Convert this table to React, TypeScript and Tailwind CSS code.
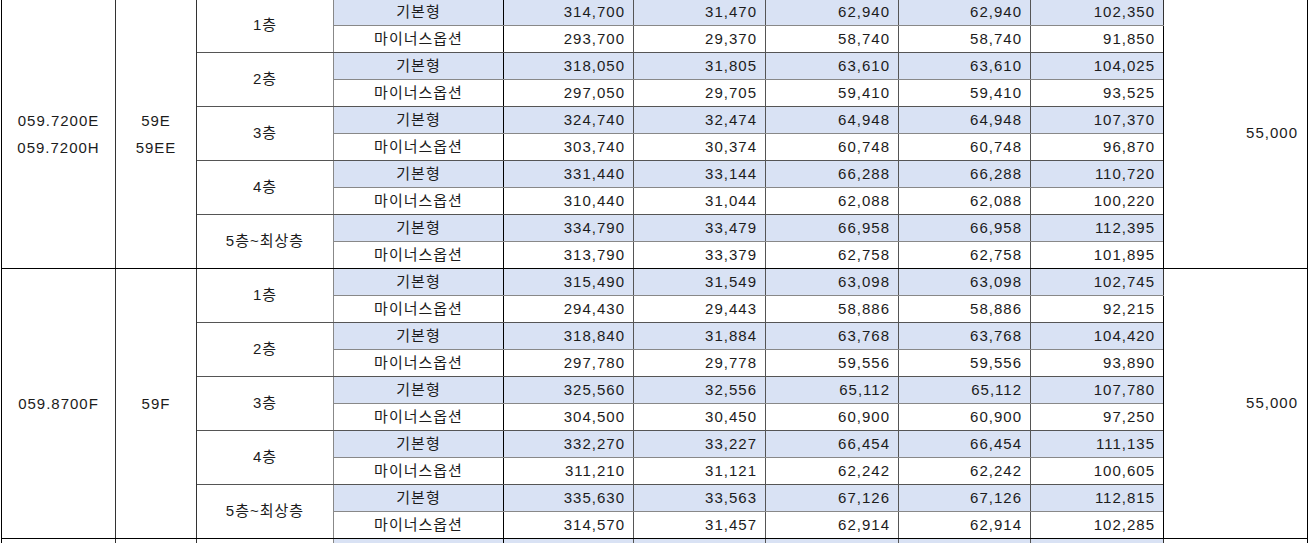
import React from "react";

type Floor = { name: string; base: string[]; minus: string[] };
type Group = { codes: string[]; types: string[]; last: string; floors: Floor[] };

const groups: Group[] = [
  {
    codes: ["059.7200E", "059.7200H"],
    types: ["59E", "59EE"],
    last: "55,000",
    floors: [
      { name: "1층", base: ["314,700", "31,470", "62,940", "62,940", "102,350"], minus: ["293,700", "29,370", "58,740", "58,740", "91,850"] },
      { name: "2층", base: ["318,050", "31,805", "63,610", "63,610", "104,025"], minus: ["297,050", "29,705", "59,410", "59,410", "93,525"] },
      { name: "3층", base: ["324,740", "32,474", "64,948", "64,948", "107,370"], minus: ["303,740", "30,374", "60,748", "60,748", "96,870"] },
      { name: "4층", base: ["331,440", "33,144", "66,288", "66,288", "110,720"], minus: ["310,440", "31,044", "62,088", "62,088", "100,220"] },
      { name: "5층~최상층", base: ["334,790", "33,479", "66,958", "66,958", "112,395"], minus: ["313,790", "33,379", "62,758", "62,758", "101,895"] },
    ],
  },
  {
    codes: ["059.8700F"],
    types: ["59F"],
    last: "55,000",
    floors: [
      { name: "1층", base: ["315,490", "31,549", "63,098", "63,098", "102,745"], minus: ["294,430", "29,443", "58,886", "58,886", "92,215"] },
      { name: "2층", base: ["318,840", "31,884", "63,768", "63,768", "104,420"], minus: ["297,780", "29,778", "59,556", "59,556", "93,890"] },
      { name: "3층", base: ["325,560", "32,556", "65,112", "65,112", "107,780"], minus: ["304,500", "30,450", "60,900", "60,900", "97,250"] },
      { name: "4층", base: ["332,270", "33,227", "66,454", "66,454", "111,135"], minus: ["311,210", "31,121", "62,242", "62,242", "100,605"] },
      { name: "5층~최상층", base: ["335,630", "33,563", "67,126", "67,126", "112,815"], minus: ["314,570", "31,457", "62,914", "62,914", "102,285"] },
    ],
  },
];

const widths = [114, 81, 137, 170, 130, 132, 133, 132, 133, 144];

const numRight = ["border-r-[#555]", "border-r-[#555]", "border-r-[#555]", "border-r-[#555]", "border-r-[#333]"];

export default function App() {
  return (
    <div className="h-[543px] w-full overflow-hidden bg-white">
      <table
        className="-mt-[2px] ml-px table-fixed border-collapse text-[15px] tracking-[1px] text-[#1c1c1c] font-['Liberation_Sans','Noto_Sans_CJK_KR',sans-serif]"
        style={{ width: 1306 }}
      >
        <colgroup>
          {widths.map((w, i) => (
            <col key={i} style={{ width: w }} />
          ))}
        </colgroup>
        <tbody>
          {groups.map((g, gi) =>
            g.floors.map((f, fi) => {
              const lastFloor = fi === g.floors.length - 1;
              return (
                <React.Fragment key={`${gi}-${fi}`}>
                  <tr className="h-[27px]">
                    {fi === 0 && (
                      <>
                        <td rowSpan={10} className="border border-black border-r-[#333] p-0 text-center align-middle leading-[27px]">
                          {g.codes.map((c) => (
                            <div key={c}>{c}</div>
                          ))}
                        </td>
                        <td rowSpan={10} className="border border-black border-r-[#333] p-0 text-center align-middle leading-[27px]">
                          {g.types.map((c) => (
                            <div key={c}>{c}</div>
                          ))}
                        </td>
                      </>
                    )}
                    <td
                      rowSpan={2}
                      className={`border border-r-[#888] p-0 text-center align-middle ${lastFloor ? "border-b-black" : "border-b-[#555]"} ${fi === 0 ? "border-t-black" : "border-t-[#555]"}`}
                    >
                      {f.name}
                    </td>
                    <td className={`border border-b-[#888] border-r-black bg-[#d9e2f4] p-0 text-center align-middle ${fi === 0 ? "border-t-black" : "border-t-[#555]"}`}>
                      기본형
                    </td>
                    {f.base.map((v, i) => (
                      <td
                        key={i}
                        className={`border border-b-[#888] bg-[#d9e2f4] p-0 pr-[8px] text-right align-middle ${numRight[i]} ${fi === 0 ? "border-t-black" : "border-t-[#555]"}`}
                      >
                        {v}
                      </td>
                    ))}
                    {fi === 0 && (
                      <td rowSpan={10} className="border border-black p-0 pr-[9px] text-right align-middle">
                        {g.last}
                      </td>
                    )}
                  </tr>
                  <tr className="h-[27px]">
                    <td className={`border border-r-black p-0 text-center align-middle ${lastFloor ? "border-b-black" : "border-b-[#555]"}`}>
                      마이너스옵션
                    </td>
                    {f.minus.map((v, i) => (
                      <td
                        key={i}
                        className={`border p-0 pr-[8px] text-right align-middle ${numRight[i]} ${lastFloor ? "border-b-black" : "border-b-[#555]"}`}
                      >
                        {v}
                      </td>
                    ))}
                  </tr>
                </React.Fragment>
              );
            })
          )}
          <tr className="h-[27px]">
            <td className="border border-black border-r-[#333] p-0">&nbsp;</td>
            <td className="border border-black border-r-[#333] p-0">&nbsp;</td>
            <td className="border border-black border-r-[#888] p-0">&nbsp;</td>
            <td className="border border-t-black border-r-black bg-[#d9e2f4] p-0">&nbsp;</td>
            <td className="border border-t-black border-r-[#555] bg-[#d9e2f4] p-0">&nbsp;</td>
            <td className="border border-t-black border-r-[#555] bg-[#d9e2f4] p-0">&nbsp;</td>
            <td className="border border-t-black border-r-[#555] bg-[#d9e2f4] p-0">&nbsp;</td>
            <td className="border border-t-black border-r-[#555] bg-[#d9e2f4] p-0">&nbsp;</td>
            <td className="border border-t-black border-r-[#333] bg-[#d9e2f4] p-0">&nbsp;</td>
            <td className="border border-black p-0">&nbsp;</td>
          </tr>
        </tbody>
      </table>
    </div>
  );
}
